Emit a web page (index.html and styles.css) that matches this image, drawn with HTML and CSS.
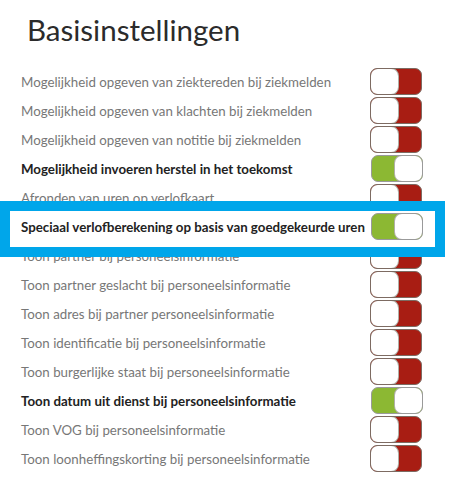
FILE: index.html
```html
<!DOCTYPE html>
<html lang="nl">

<head>
    <meta charset="UTF-8">
    <meta name="viewport" content="width=device-width, initial-scale=1.0">
    <title>Basisinstellingen</title>
    <link rel="stylesheet" href="styles.css">
</head>

<body>
    <h1 class="title">Basisinstellingen</h1>

    <div class="settings">
        <div class="setting-row">
            <span class="label">Mogelijkheid opgeven van ziektereden bij ziekmelden</span>
            <span class="switch off"><span class="knob"></span></span>
        </div>
        <div class="setting-row">
            <span class="label">Mogelijkheid opgeven van klachten bij ziekmelden</span>
            <span class="switch off"><span class="knob"></span></span>
        </div>
        <div class="setting-row">
            <span class="label">Mogelijkheid opgeven van notitie bij ziekmelden</span>
            <span class="switch off"><span class="knob"></span></span>
        </div>
        <div class="setting-row active">
            <span class="label">Mogelijkheid invoeren herstel in het toekomst</span>
            <span class="switch on"><span class="knob"></span></span>
        </div>
        <div class="setting-row">
            <span class="label">Afronden van uren op verlofkaart</span>
            <span class="switch off"><span class="knob"></span></span>
        </div>
        <div class="setting-row active highlight">
            <span class="label">Speciaal verlofberekening op basis van goedgekeurde uren</span>
            <span class="switch on"><span class="knob"></span></span>
        </div>
        <div class="setting-row">
            <span class="label">Toon partner bij personeelsinformatie</span>
            <span class="switch off"><span class="knob"></span></span>
        </div>
        <div class="setting-row">
            <span class="label">Toon partner geslacht bij personeelsinformatie</span>
            <span class="switch off"><span class="knob"></span></span>
        </div>
        <div class="setting-row">
            <span class="label">Toon adres bij partner personeelsinformatie</span>
            <span class="switch off"><span class="knob"></span></span>
        </div>
        <div class="setting-row">
            <span class="label">Toon identificatie bij personeelsinformatie</span>
            <span class="switch off"><span class="knob"></span></span>
        </div>
        <div class="setting-row">
            <span class="label">Toon burgerlijke staat bij personeelsinformatie</span>
            <span class="switch off"><span class="knob"></span></span>
        </div>
        <div class="setting-row active">
            <span class="label">Toon datum uit dienst bij personeelsinformatie</span>
            <span class="switch on"><span class="knob"></span></span>
        </div>
        <div class="setting-row">
            <span class="label">Toon VOG bij personeelsinformatie</span>
            <span class="switch off"><span class="knob"></span></span>
        </div>
        <div class="setting-row">
            <span class="label">Toon loonheffingskorting bij personeelsinformatie</span>
            <span class="switch off"><span class="knob"></span></span>
        </div>
    </div>
</body>

</html>
```

FILE: styles.css
```css
body {
    margin: 0;
    padding: 0;
    background-color: #ffffff;
    font-family: Lato, "Open Sans", Arial, sans-serif;
    color: #777777;
}

.title {
    margin: 12px 0 0 27px;
    font-size: 29.5px;
    font-weight: normal;
    color: #2b2b2b;
    line-height: 36px;
}

.settings {
    margin: 19px 0 0 21px;
    width: 401px;
}

.setting-row {
    display: flex;
    align-items: center;
    justify-content: space-between;
    height: 29px;
    font-size: 13.3px;
}

.setting-row.active .label {
    color: #222222;
    font-weight: bold;
}

/* blue frame around the row that is pointed out */
.highlight {
    position: relative;
    z-index: 1;
}

.highlight::before {
    content: "";
    position: absolute;
    top: -11px;
    bottom: -16px;
    left: -21px;
    right: -23px;
    border: 10px solid #00a6ea;
    background-color: #ffffff;
    z-index: -1;
}

.switch {
    display: flex;
    width: 50px;
    height: 25px;
    border: 1px solid #9a9a9a;
    border-radius: 7px;
    overflow: hidden;
    box-sizing: content-box;
}

.switch.off {
    background-color: #a81d13;
    border-color: #7d6b62;
}

.switch.on {
    background-color: #8cb833;
    justify-content: flex-end;
    margin-right: -1px;
}

.knob {
    width: 27px;
    height: 25px;
    background-color: #ffffff;
    border-radius: 7px;
    box-shadow: 0 0 0 1px #b0b0a8;
}
```
